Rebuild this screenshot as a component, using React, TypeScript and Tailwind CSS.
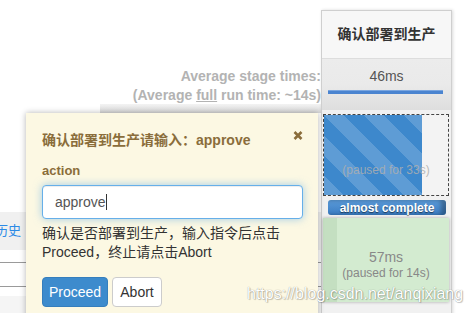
export default function App() {
  return (
    <div className="relative w-[470px] h-[313px] overflow-hidden bg-white font-['Liberation_Sans','Noto_Sans_CJK_SC',sans-serif]">
      <div className="flex">
        {/* left: stage view header + table rows under the popup */}
        <div className="w-[321px] shrink-0 flex flex-col">
          <div className="pt-[67px] text-right text-[14px] font-bold leading-[19px] text-[#b3b3b3]">
            <p>Average stage times:</p>
            <p>
              (Average <span className="underline">full</span> run time: ~14s)
            </p>
          </div>
          <div className="ml-[100px] -mt-[1px] h-[9px] bg-gradient-to-b from-[#f3f3f3] to-[#d8d8d8]" />
          <div className="h-[99px]" />
          <div className="h-[38px] bg-[#f0f0f0] flex items-center overflow-hidden">
            <span className="-ml-[5px] text-[13px] text-[#2d8ae6]">历史</span>
          </div>
          <div className="h-[13px] border-b border-[#9a9a9a]" />
          <div className="h-[24px] border-b border-[#9a9a9a]" />
          <div className="h-[9px]" />
          <div className="h-[40px] bg-[#f5f5f5]" />
        </div>

        {/* right: stage column */}
        <div className="mt-[10px] w-[131px] shrink-0 border border-[#cfcfcf] shadow-[1px_0_3px_rgba(0,0,0,0.15)] flex flex-col">
          <div className="h-[48px] bg-[#f7f7f7] border-b border-[#dddddd] flex items-center justify-center text-[14px] font-bold text-[#333]">
            确认部署到生产
          </div>
          <div className="h-[51px] bg-gradient-to-b from-[#ececec] via-[#eaeaea] to-[#dedede] flex flex-col">
            <p className="pt-[9px] text-center text-[14px] leading-[17px] text-[#555]">46ms</p>
            <div className="mt-[5px] ml-[6px] mr-[8px] h-[4px] bg-[#4a84d0] border-t border-[#7aa6e0]" />
          </div>
          <div className="bg-[#f1f1f1] flex flex-col pb-[20px]">
            <div className="mt-[4px] ml-[1px] w-[126px] h-[82px] border border-dashed border-[#444] grid bg-[#f3f3f3]">
              <div className="[grid-area:1/1] w-[98px] h-full bg-[#3d88cc] bg-[linear-gradient(45deg,rgba(255,255,255,.17)_25%,transparent_25%,transparent_50%,rgba(255,255,255,.17)_50%,rgba(255,255,255,.17)_75%,transparent_75%,transparent)] bg-[length:40px_40px]" />
              <p className="[grid-area:1/1] pt-[48px] text-center text-[12px] leading-[14px] text-[rgba(175,175,175,0.85)]">
                (paused for 33s)
              </p>
            </div>
            <div className="mt-[4px] ml-[6px] w-[118px] h-[15px] rounded-[3px] bg-gradient-to-b from-[#5a9ad8] to-[#3b7dc4] shadow-[inset_-5px_0_4px_rgba(0,0,0,0.3)] flex items-center justify-center text-[12px] font-bold text-white [text-shadow:0_1px_1px_rgba(0,0,0,0.55)]">
              almost complete
            </div>
            <div className="mt-[3px] ml-[1px] w-[126px] h-[84px] grid bg-[#d3ebd0] shadow-[0_0_3px_rgba(0,0,0,0.3)]">
              <div className="[grid-area:1/1] w-[14px] h-full bg-[#c4dfc1]" />
              <div className="[grid-area:1/1] pt-[31px] flex flex-col items-center text-[#888]">
                <p className="text-[14px] leading-[17px]">57ms</p>
                <p className="text-[12px] leading-[15px]">(paused for 14s)</p>
              </div>
            </div>
          </div>
        </div>
      </div>

      {/* input popup */}
      <div className="absolute left-[26px] top-[113px] w-[292px] h-[220px] bg-[#fcf8e3] shadow-[0_0_6px_rgba(0,0,0,0.3)] pl-[16px] pr-[15px] pt-[17px] flex flex-col">
        <div className="flex justify-between items-start h-[20px]">
          <p className="text-[14px] font-bold leading-[20px] text-[#8a6d3b]">确认部署到生产请输入：approve</p>
          <svg width="10" height="9" viewBox="0 0 10 9" className="mt-[1px]">
            <path d="M1.5 1 L8.5 8 M8.5 1 L1.5 8" stroke="#8a6d3b" strokeWidth="2.6" />
          </svg>
        </div>
        <p className="mt-[12px] text-[13px] font-bold leading-[18px] text-[#8a6d3b]">action</p>
        <div className="mt-[5px] h-[34px] rounded-[4px] border border-[#66afe9] bg-white px-[12px] flex items-center text-[14px] text-[#555] shadow-[inset_0_1px_1px_rgba(0,0,0,0.075),0_0_8px_rgba(102,175,233,0.6)]">
          approve
          <span className="w-[1px] h-[16px] bg-[#333]" />
        </div>
        <p className="mt-[5px] text-[14px] leading-[19px] text-[#333]">
          确认是否部署到生产，输入指令后点击Proceed，终止请点击Abort
        </p>
        <div className="mt-[15px] flex gap-[4px]">
          <button className="w-[66px] h-[30px] rounded-[4px] bg-[#3d8bcd] border border-[#357ebd] text-[14px] text-white">
            Proceed
          </button>
          <button className="w-[50px] h-[30px] rounded-[4px] bg-white border border-[#cccccc] text-[14px] text-[#333]">
            Abort
          </button>
        </div>
      </div>

      {/* watermark */}
      <p className="absolute left-[247px] top-[285px] text-[16px] leading-[18px] text-white [text-shadow:0_0_1px_rgba(0,0,0,0.45),1px_1px_1px_rgba(0,0,0,0.2)]">
        https://blog.csdn.net/anqixiang
      </p>
    </div>
  );
}
